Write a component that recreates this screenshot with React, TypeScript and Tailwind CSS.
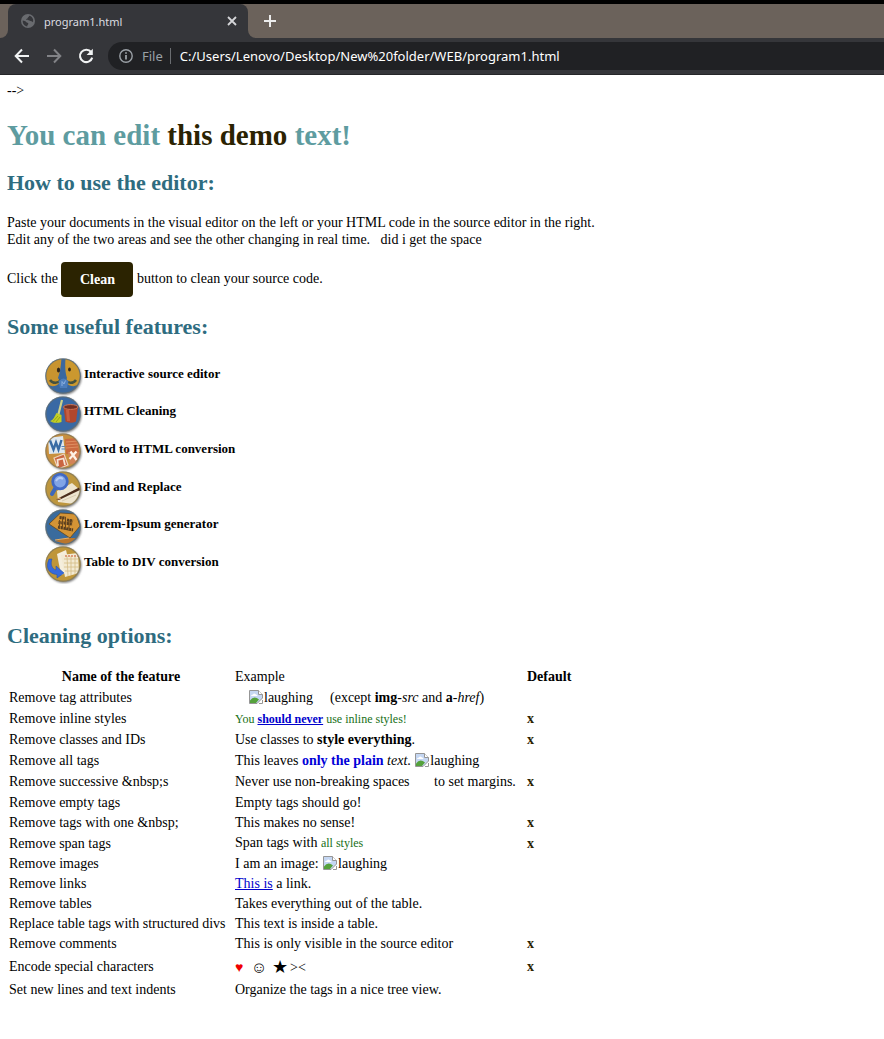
import type { ReactNode } from "react";

function Globe() {
  return (
    <svg viewBox="0 0 16 16" className="h-[14px] w-[14px]" aria-hidden="true">
      <circle cx="8" cy="8" r="8" fill="#696b6f" />
      <path
        d="M2 7.5 C3.5 8 5 7.8 5.8 9 C6.6 10.2 8.6 9.6 8.4 11.2 C8.2 12.6 7 12.8 7.2 14.2 C4 14 1.6 11 2 7.5Z M9.2 1.9 C9.4 3.4 7.8 3.4 7.6 4.6 C7.5 5.6 6 5.4 6 6.4 C6.2 7.4 8.8 6.8 10.2 7.6 C11.4 8.4 12.4 7.6 13.6 9.4 C14.8 6 12.8 2.6 9.2 1.9Z"
        fill="#35363a"
      />
    </svg>
  );
}

function BrowserBar() {
  return (
    <header className="border-t-4 border-black bg-[#6b625b] font-['Noto_Sans','Open_Sans',sans-serif]">
      <div className="flex h-[34px] items-end">
        <div className="h-full w-2 bg-[#35363a]">
          <div className="h-full rounded-br-lg bg-[#6b625b]" />
        </div>
        <div className="flex h-full w-[240px] items-center rounded-t-lg bg-[#35363a] pl-[13px] pr-2 text-[11px] text-[#dcdde0]">
          <Globe />
          <span className="ml-[9px] grow">program1.html</span>
          <button type="button" aria-label="Close tab" className="flex h-4 w-4 items-center justify-center">
            <svg viewBox="0 0 10 10" className="h-[10px] w-[10px]" stroke="#d5d6d9" strokeWidth="1.8">
              <path d="M1 1 L9 9 M9 1 L1 9" />
            </svg>
          </button>
        </div>
        <div className="h-full grow bg-[#35363a]">
          <div className="flex h-full items-center rounded-bl-lg bg-[#6b625b] pl-[15px]">
            <button type="button" aria-label="New tab">
              <svg viewBox="0 0 14 14" className="h-[14px] w-[14px]" stroke="#ececec" strokeWidth="2">
                <path d="M7 1 V13 M1 7 H13" />
              </svg>
            </button>
          </div>
        </div>
      </div>
      <div className="flex h-[37px] items-center border-b border-[#252629] bg-[#35363a] pl-[14px]">
        <button type="button" aria-label="Back" className="mr-4">
          <svg viewBox="0 0 16 16" className="h-4 w-4" fill="none" stroke="#f1f3f4" strokeWidth="2">
            <path d="M15 8 H2 M8 1.5 L1.7 8 L8 14.5" />
          </svg>
        </button>
        <button type="button" aria-label="Forward" className="mr-4">
          <svg viewBox="0 0 16 16" className="h-4 w-4" fill="none" stroke="#828387" strokeWidth="2">
            <path d="M1 8 H14 M8 1.5 L14.3 8 L8 14.5" />
          </svg>
        </button>
        <button type="button" aria-label="Reload" className="mr-[14px]">
          <svg viewBox="0 0 16 16" className="h-4 w-4" fill="none" stroke="#f1f3f4" strokeWidth="2.1">
            <path d="M13.2 4.2 A6.2 6.2 0 1 0 14.2 9.6" />
            <path d="M14.8 0.8 V7 H8.6Z" fill="#f1f3f4" stroke="none" />
          </svg>
        </button>
        <div className="flex h-7 grow items-center rounded-l-full bg-[#202124] pl-[11px] text-[13px]">
          <svg viewBox="0 0 14 14" className="h-[14px] w-[14px]" aria-hidden="true">
            <circle cx="7" cy="7" r="6.2" fill="none" stroke="#9aa0a6" strokeWidth="1.4" />
            <path d="M7 3.2 V4.8 M7 6 V10.6" stroke="#9aa0a6" strokeWidth="1.8" />
          </svg>
          <span className="ml-[9px] text-[#9aa0a6]">File</span>
          <span className="ml-[7px] mr-[9px] h-4 w-px bg-[#6a6d71]" />
          <span className="whitespace-nowrap text-white">C:/Users/Lenovo/Desktop/New%20folder/WEB/program1.html</span>
        </div>
      </div>
    </header>
  );
}

function Badge({ color, id, children }: { color: string; id: string; children: ReactNode }) {
  return (
    <svg viewBox="0 0 38 38" className="h-[38px] w-[38px] shrink-0" aria-hidden="true">
      <defs>
        <clipPath id={id}>
          <circle cx="18" cy="18" r="17" />
        </clipPath>
        <filter id={id + "-shade"} x="-10%" y="-10%" width="130%" height="130%">
          <feGaussianBlur stdDeviation="0.8" />
        </filter>
      </defs>
      <circle cx="19" cy="19.4" r="17.4" fill="#777" filter={`url(#${id}-shade)`} />
      <circle cx="18" cy="18" r="17.6" fill={color} />
      <g clipPath={`url(#${id})`}>{children}</g>
      <circle cx="18" cy="18" r="17.1" fill="none" stroke="#6f7062" strokeOpacity="0.6" strokeWidth="1.2" />
    </svg>
  );
}

const features: { label: string; icon: ReactNode }[] = [
  {
    label: "Interactive source editor",
    icon: (
      <Badge id="face" color="#3a689f">
        <path d="M16.5 0 H0 V24 C3 29 11 30 15.5 24 L13 20 C15 14 16 8 16.5 0Z" fill="#c8942f" />
        <path d="M20.5 0 H36 V24 C33 29 25 30 20.5 24 L22 20 C20 14 20 8 20.5 0Z" fill="#cb982f" />
        <ellipse cx="13.5" cy="12" rx="1.6" ry="2.6" fill="#33281b" />
        <ellipse cx="24.5" cy="11.5" rx="1.4" ry="2.1" fill="#33281b" />
        <path d="M5 22 C8 26 13 25.500 16 22 M31 22 C28 26 23 25.500 20 22" stroke="#45513f" strokeWidth="2.6" fill="none" />
        <path d="M13.500 23 Q18.500 18 23.500 23 L22 30 H15Z" fill="#4c7dbc" />
        <path d="M17 28 V23.500 L19 26 L20.500 22.500" stroke="#8bb0df" strokeWidth="1" fill="none" />
      </Badge>
    ),
  },
  {
    label: "HTML Cleaning",
    icon: (
      <Badge id="clean" color="#3969a4">
        <path d="M17 4 L13 20" stroke="#cfd389" strokeWidth="2.2" />
        <path d="M11.5 17 L16.5 19 L16.5 26 C12 27.5 8 27 5 25 C9 24 9.5 20 11.5 17Z" fill="#c3cf25" />
        <path d="M8 25.5 L13 20 M11 26 L15 21" stroke="#8c9b18" strokeWidth="0.8" />
        <path d="M18.5 11 H33 L31 25.5 Q26 28 20.5 25.5Z" fill="#b2472c" />
        <path d="M21 14 L22 25 H25 L24 14Z" fill="#c65f43" />
        <ellipse cx="25.7" cy="11" rx="7.2" ry="2.4" fill="#713024" stroke="#cd7659" strokeWidth="1" />
      </Badge>
    ),
  },
  {
    label: "Word to HTML conversion",
    icon: (
      <Badge id="word" color="#c8903e">
        <path d="M3 5 L18 3 L20 20 L4 21Z" fill="#dfe8f0" />
        <path d="M5 7.5 L8.500 16.500 L11 9.500 L13.500 16.500 L16.500 7" fill="none" stroke="#396ba4" strokeWidth="2.4" />
        <path d="M16.5 13.5 h4 M16.5 16 h4" stroke="#5985b5" strokeWidth="1.2" />
        <path d="M20 6 L33 5 L34 21 L21 21Z" fill="#ca6a40" />
        <path d="M21 9 L33 8 M21 12 L33 11 M21 15 L33 14" stroke="#e39869" strokeWidth="0.8" />
        <path d="M9 25 L19 21 L23 32 L13 36Z" fill="#ca6540" stroke="#efd4bb" strokeWidth="1.2" />
        <path d="M13 33 L12.5 27 L18.500 25.500 L20 32" fill="none" stroke="#f4e4d5" strokeWidth="1.8" />
        <path d="M23 19 H35 V30 L25 31Z" fill="#d38358" />
        <path d="M25.500 18.500 L31.500 27 M31.5 18.500 L24.500 26" stroke="#fff2e6" strokeWidth="2.2" />
      </Badge>
    ),
  },
  {
    label: "Find and Replace",
    icon: (
      <Badge id="find" color="#bd963e">
        <path d="M12 20 L27 12 L36 20 L29 33 L13 31Z" fill="#eee5cf" />
        <path d="M14 27 L29 20 M17 30 L31 24" stroke="#d8ccb2" strokeWidth="1" />
        <path d="M11 28.5 L34 16.5 L35 19 L14 29Z" fill="#4b2d1c" />
        <path d="M11 28.5 L15 26 L16 28Z" fill="#d6a36d" />
        <path d="M10.5 17 L7 23" stroke="#3e68ba" strokeWidth="4" strokeLinecap="round" />
        <circle cx="15" cy="10.5" r="7.3" fill="#81a4e6" stroke="#4169c4" strokeWidth="2.8" />
        <path d="M11 10 Q14 5 18 8" stroke="#b6cbf5" strokeWidth="2" fill="none" />
      </Badge>
    ),
  },
  {
    label: "Lorem-Ipsum generator",
    icon: (
      <Badge id="lorem" color="#3a6b9d">
        <path d="M15.500 4 L31 5 L35 17 L25 29 L4 15Z" fill="#d49435" stroke="#624720" strokeWidth="0.8" />
        <path d="M14.500 8.500 L20.500 9 M13.500 13.500 L27.500 15 M13 18 L28 21 M22 11 L28 12" stroke="#573e20" strokeWidth="3" strokeDasharray="2.2 0.6" />
        <path d="M14.500 11 V20 M17.500 8 V19 M20.500 8 V21 M24 11 V22" stroke="#6b481d" strokeWidth="1" />
        <path d="M10 32 L22 29 L32 29 L24 36Z" fill="#ba762d" />
        <path d="M10 31 L24 29" stroke="#e5ad62" strokeWidth="1.2" />
      </Badge>
    ),
  },
  {
    label: "Table to DIV conversion",
    icon: (
      <Badge id="table" color="#bf9639">
        <path d="M12 8 L21 4 L26 25 L16 29Z" fill="#f5eedc" />
        <path d="M16 9 L33 7 L34 27 L20 31Z" fill="#f3ead3" />
        <path d="M19 13 H33 M19 17 H34 M19 21 H34 M20 25 H34 M22 10 L23 30 M26 10 V29 M30 9 V28" stroke="#d4bd87" strokeWidth="0.8" />
        <path d="M20 10 H33" stroke="#d98563" strokeWidth="1.5" strokeDasharray="2 1" />
        <path d="M4 13 C0 22 4 28 12 28.500 V32 L19 27 L11 20 V24 C7 23 5 18 7 13Z" fill="#376add" stroke="#2855ad" strokeWidth="0.6" />
      </Badge>
    ),
  },
];

function Laughing() {
  return (
    <span>
      <svg viewBox="0 0 16 16" className="inline h-4 w-4 align-text-bottom" aria-hidden="true">
        <path d="M1.5 1.5 H10.5 L14.5 5.5 V9 L9 14.5 H1.5Z" fill="#c5d7f3" stroke="#969696" />
        <path d="M3 7 Q3 5.5 5 5.5 Q6 3.5 8 5.5 Q9.5 5.5 9.5 7Z" fill="#fff" />
        <path d="M2 14 V11.5 Q6 6 11 10.5 L8 14Z" fill="#55a23c" />
        <path d="M10.5 1.5 V5.5 H14.5" fill="#fff" stroke="#969696" />
        <path d="M14.5 11 V14.5 H11" fill="none" stroke="#969696" />
      </svg>
      laughing
    </span>
  );
}

type Row = { name: string; example: ReactNode; on?: boolean; height: string };

const rows: Row[] = [
  {
    name: "Remove tag attributes",
    height: "h-[21px]",
    example: (
      <span className="pl-[13px]">
        <Laughing />
        <span className="pl-[17px]">(except <b>img</b>-<i>src</i> and <b>a</b>-<i>href</i>)</span>
      </span>
    ),
  },
  {
    name: "Remove inline styles",
    height: "h-[21px]",
    on: true,
    example: (
      <span className="text-[12px] text-[#187018]">
        You <a href="#styles" className="font-bold text-[#0000cc] underline">should never</a> use inline styles!
      </span>
    ),
  },
  { name: "Remove classes and IDs", height: "h-[21px]", on: true, example: <>Use classes to <b>style everything</b>.</> },
  {
    name: "Remove all tags",
    height: "h-[21px]",
    example: <>This leaves <b className="text-[#0000d8]">only the plain</b> <i>text</i>. <Laughing /></>,
  },
  {
    name: "Remove successive &nbsp;s",
    height: "h-[21px]",
    on: true,
    example: <>Never use non-breaking spaces{"\u00a0\u00a0\u00a0\u00a0\u00a0\u00a0 "}to set margins.</>,
  },
  { name: "Remove empty tags", height: "h-[20px]", example: "Empty tags should go!" },
  { name: "Remove tags with one &nbsp;", height: "h-[21px]", on: true, example: "This makes no sense!" },
  {
    name: "Remove span tags",
    height: "h-[20px]",
    on: true,
    example: <>Span tags with <span className="text-[12px] text-[#187018]">all styles</span></>,
  },
  { name: "Remove images", height: "h-[20px]", example: <>I am an image: <Laughing /></> },
  {
    name: "Remove links",
    height: "h-[20px]",
    example: <><a href="#link" className="text-[#0000cc] underline">This is</a> a link.</>,
  },
  { name: "Remove tables", height: "h-[20px]", example: "Takes everything out of the table." },
  { name: "Replace table tags with structured divs", height: "h-[20px]", example: "This text is inside a table." },
  { name: "Remove comments", height: "h-[21px]", on: true, example: "This is only visible in the source editor" },
  {
    name: "Encode special characters",
    height: "h-[25px]",
    on: true,
    example: (
      <span className="flex items-center pt-[2px]">
        <span className="w-4 text-[14px] text-[#f00000]">♥</span>
        <span className="w-[21px] text-[16px]">☺</span>
        <span className="w-[18px] text-[18px]">★</span>
        <span>&gt;&lt;</span>
      </span>
    ),
  },
  { name: "Set new lines and text indents", height: "h-[21px]", example: "Organize the tags in a nice tree view." },
];

function SectionTitle({ children }: { children: ReactNode }) {
  return <h2 className="text-[22px] font-bold leading-[26px] text-[#2e6c80]">{children}</h2>;
}

export default function App() {
  return (
    <div className="min-h-screen bg-white font-['Liberation_Serif',serif] text-[14px] leading-[17px] text-black">
      <BrowserBar />
      <main className="px-[7px] pb-8 pt-[7px]">
        <p>--&gt;</p>
        <h1 className="mt-[19px] text-[29px] font-bold leading-[34px] text-[#5e9ca0]">
          You can edit <span className="text-[#2b2301]">this demo</span> text!
        </h1>
        <div className="mt-[18px]">
          <SectionTitle>How to use the editor:</SectionTitle>
        </div>
        <p className="mt-[18px]">
          Paste your documents in the visual editor on the left or your HTML code in the source editor in the right.
          <br />
          Edit any of the two areas and see the other changing in real time.{"\u00a0\u00a0 "}did i get the space
        </p>
        <p className="mt-[14px]">
          Click the{" "}
          <button type="button" className="h-[35px] w-[72px] rounded bg-[#2b2301] align-middle font-bold text-white">
            Clean
          </button>{" "}
          button to clean your source code.
        </p>
        <div className="mt-[17px]">
          <SectionTitle>Some useful features:</SectionTitle>
        </div>
        <ul className="mt-[18px] grid h-[226px] grid-rows-6 pl-[38px] text-[13px] font-bold">
          {features.map((feature) => (
            <li key={feature.label} className="flex items-center">
              {feature.icon}
              <span className="ml-px pb-[7px]">{feature.label}</span>
            </li>
          ))}
        </ul>
        <div className="mt-[39px]">
          <SectionTitle>Cleaning options:</SectionTitle>
        </div>
        <table className="mt-[17px] border-collapse whitespace-nowrap">
          <thead>
            <tr className="h-[21px]">
              <th className="w-[226px] pl-[2px] font-bold">Name of the feature</th>
              <td className="w-[292px] pl-[2px]">Example</td>
              <th className="pl-[2px] text-left font-bold">Default</th>
            </tr>
          </thead>
          <tbody>
            {rows.map((row) => (
              <tr key={row.name} className={row.height}>
                <td className="pl-[2px]">{row.name}</td>
                <td className="pl-[2px]">{row.example}</td>
                <td className="pl-[2px] font-bold text-[#2b2301]">{row.on ? "x" : ""}</td>
              </tr>
            ))}
          </tbody>
        </table>
      </main>
    </div>
  );
}
